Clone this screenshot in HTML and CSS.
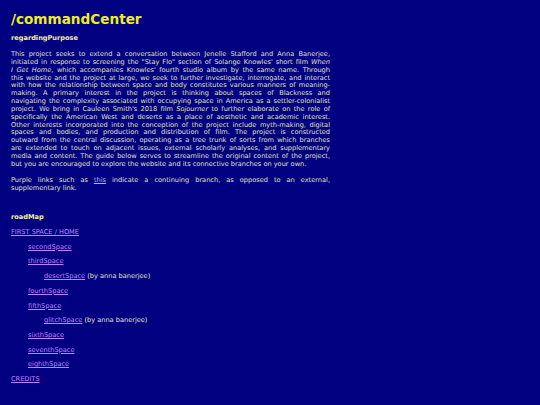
FILE: index.html
```html
<!DOCTYPE html>
<html>
<head>
<meta charset="utf-8">
<link rel="stylesheet" href="styles.css">
</head>
<body>
<div class="page">
  <h1 class="title">/commandCenter</h1>
  <h3 class="heading">regardingPurpose</h3>
  <p class="text">
    <span class="ln">This project seeks to extend a conversation between Jenelle Stafford and Anna Banerjee,</span>
    <span class="ln">initiated in response to screening the "Stay Flo" section of Solange Knowles' short film <i>When</i></span>
    <span class="ln"><i>I Get Home</i>, which accompanies Knowles' fourth studio album by the same name. Through</span>
    <span class="ln">this website and the project at large, we seek to further investigate, interrogate, and interact</span>
    <span class="ln">with how the relationship between space and body constitutes various manners of meaning-</span>
    <span class="ln">making. A primary interest in the project is thinking about spaces of Blackness and</span>
    <span class="ln">navigating the complexity associated with occupying space in America as a settler-colonialist</span>
    <span class="ln">project. We bring in Cauleen Smith's 2018 film <i>Sojourner</i> to further elaborate on the role of</span>
    <span class="ln">specifically the American West and deserts as a place of aesthetic and academic interest.</span>
    <span class="ln">Other interests incorporated into the conception of the project include myth-making, digital</span>
    <span class="ln">spaces and bodies, and production and distribution of film. The project is constructed</span>
    <span class="ln">outward from the central discussion, operating as a tree trunk of sorts from which branches</span>
    <span class="ln">are extended to touch on adjacent issues, external scholarly analyses, and supplementary</span>
    <span class="ln">media and content. The guide below serves to streamline the original content of the project,</span>
    <span class="ln last">but you are encouraged to explore the website and its connective branches on your own.</span>
  </p>
  <p class="text">
    <span class="ln">Purple links such as <a class="ext" href="#">this</a> indicate a continuing branch, as opposed to an external,</span>
    <span class="ln last">supplementary link.</span>
  </p>
  <h3 class="heading road">roadMap</h3>
  <p class="item first"><a class="branch" href="#">FIRST SPACE / HOME</a></p>
  <p class="item lvl1"><a class="branch" href="#">secondSpace</a></p>
  <p class="item lvl1"><a class="branch" href="#">thirdSpace</a></p>
  <p class="item lvl2"><a class="branch" href="#">desertSpace</a> (by anna banerjee)</p>
  <p class="item lvl1"><a class="branch" href="#">fourthSpace</a></p>
  <p class="item lvl1"><a class="branch" href="#">fifthSpace</a></p>
  <p class="item lvl2"><a class="branch" href="#">glitchSpace</a> (by anna banerjee)</p>
  <p class="item lvl1"><a class="branch" href="#">sixthSpace</a></p>
  <p class="item lvl1"><a class="branch" href="#">seventhSpace</a></p>
  <p class="item lvl1"><a class="branch" href="#">eighthSpace</a></p>
  <p class="item"><a class="branch" href="#">CREDITS</a></p>
</div>
</body>
</html>
```

FILE: styles.css
```css
html, body {
  margin: 0;
  padding: 0;
  background: #000080;
}
.page {
  width: 319px;
  padding: 11px 11px 10px 11px;
  font-family: "DejaVu Sans", Verdana, sans-serif;
  font-size: 6.6px;
  line-height: 7.85px;
  color: #e0e0c0;
}
.title {
  font-size: 13.6px;
  font-weight: bold;
  color: #eeee18;
  margin: 0 0 7.8px 0;
  line-height: 16px;
}
.heading {
  font-size: 6.6px;
  font-weight: bold;
  color: #f8f0a0;
  margin: 0 0 8.4px 0;
}
.heading.road {
  margin-top: 21.6px;
  margin-bottom: 7.15px;
}
.text {
  margin: 0 0 8px 0;
}
.ln {
  display: block;
  white-space: nowrap;
  text-align: justify;
  text-align-last: justify;
}
.ln.last {
  text-align-last: left;
}
.item {
  margin: 0 0 6.89px 0;
  white-space: nowrap;
}
.lvl1 { padding-left: 17px; }
.lvl2 { padding-left: 33px; }
.ext { color: #b4b4ff; }
.branch { color: #c080ff; }
```
